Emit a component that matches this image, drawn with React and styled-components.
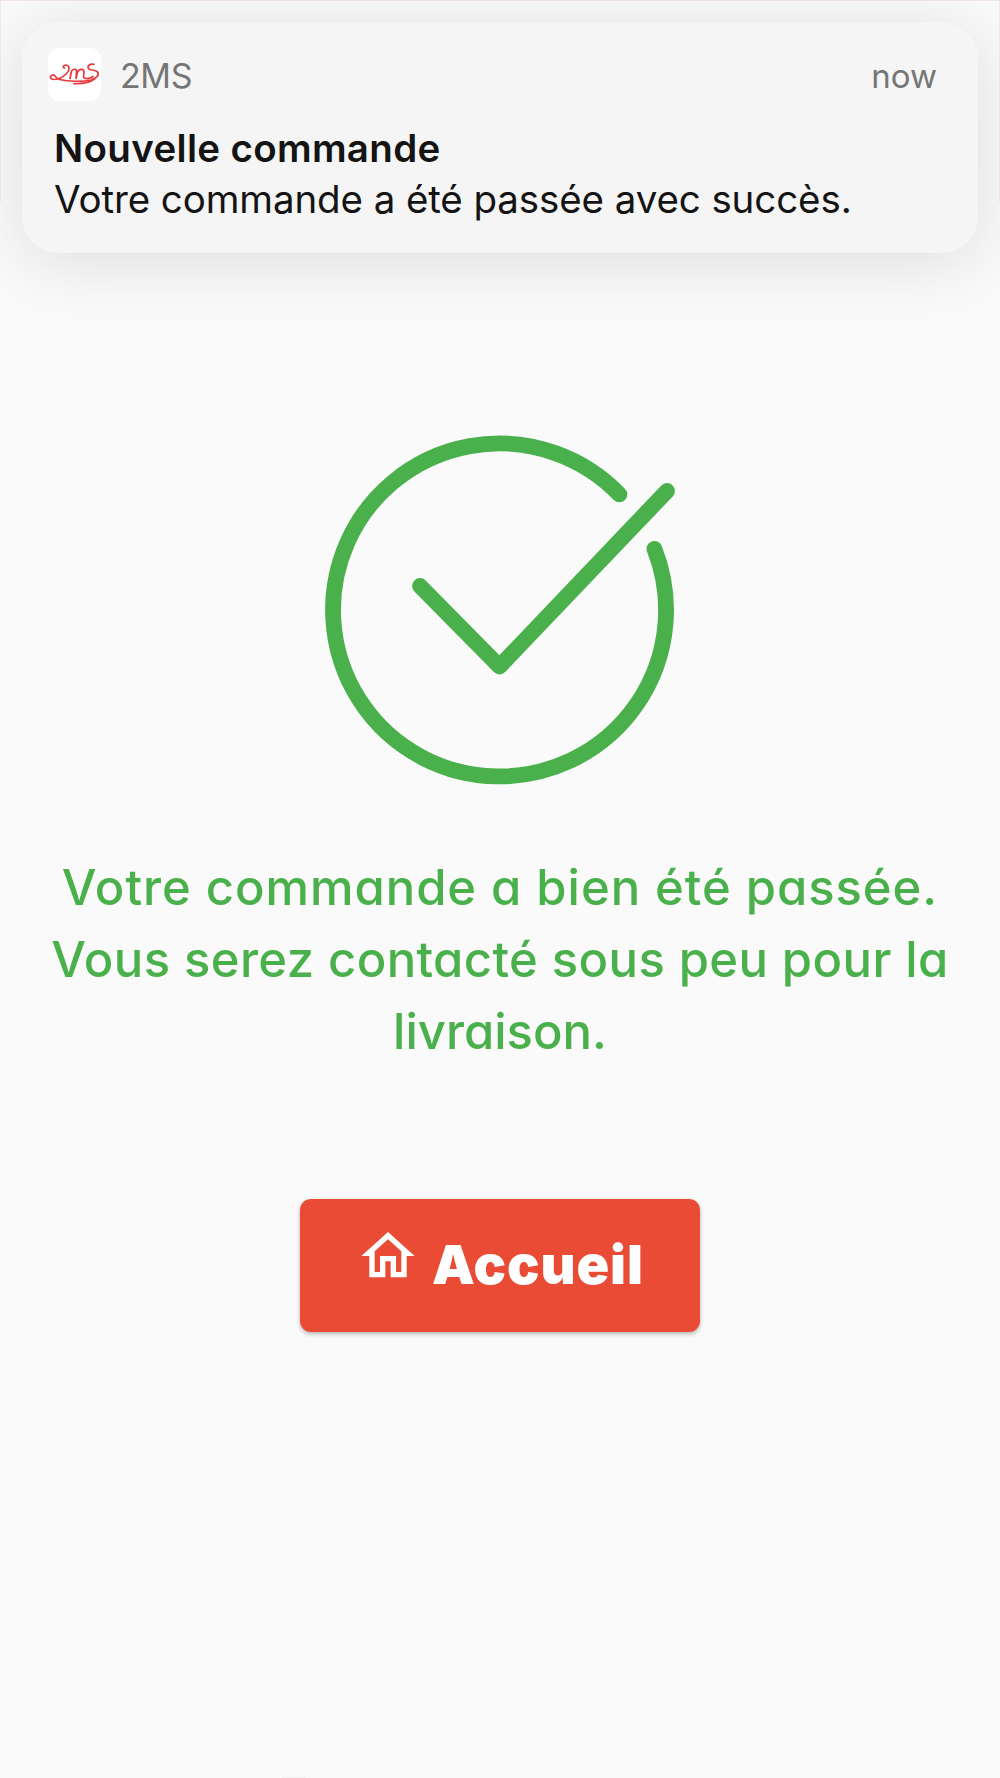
import styled, { createGlobalStyle } from "styled-components";
import { MdOutlineHome } from "react-icons/md";

const GlobalStyle = createGlobalStyle`
  * {
    box-sizing: border-box;
  }
  body {
    margin: 0;
    background-color: #fafafa;
  }
`;

const Container = styled.div`
  width: 1000px;
  height: 1778px;
  padding: 21.5px 22px 0;
  display: flex;
  flex-direction: column;
  align-items: center;
  overflow: hidden;
  font-family: Inter, "Liberation Sans", sans-serif;
  background:
    linear-gradient(#f3e6e7, #f3e6e7) top / 100% 1px no-repeat,
    linear-gradient(#f6eaeb, #f6eaeb) top left / 1px 202px no-repeat,
    linear-gradient(#f6eaeb, #f6eaeb) top right / 1px 202px no-repeat,
    linear-gradient(#f1f1f1, #f1f1f1) 282px 100% / 23px 1px no-repeat,
    #fafafa;
`;

const Notification = styled.div`
  width: 956px;
  height: 231.5px;
  padding: 26.5px 41px 0 26px;
  border-radius: 36px;
  background-color: #f5f5f5;
  box-shadow: 0 8px 68px rgba(0, 0, 0, 0.12);
`;

const Header = styled.div`
  height: 53px;
  display: flex;
  align-items: center;
  color: #757575;
`;

const AppIcon = styled.div`
  width: 53px;
  height: 53px;
  margin-right: 19px;
  border-radius: 11px;
  background-color: white;
`;

const AppName = styled.span`
  flex: 1;
  font-size: 34px;
  line-height: 40px;
  letter-spacing: -0.4px;
  padding-top: 3px;
`;

const Time = styled.span`
  font-size: 33px;
  line-height: 40px;
  padding-top: 3px;
`;

const Title = styled.div`
  margin: 22px 0 0 6px;
  font-size: 38.5px;
  line-height: 51px;
  font-weight: 600;
  letter-spacing: 0.32px;
  color: #141414;
  white-space: nowrap;
`;

const Body = styled.div`
  margin-left: 6px;
  font-size: 38.5px;
  line-height: 51px;
  letter-spacing: -0.1px;
  color: #141414;
  white-space: nowrap;
`;

const CheckIcon = styled.svg`
  width: 350px;
  height: 350px;
  margin-top: 182px;
  fill: none;
  stroke: #49b04b;
  stroke-width: 15.8;
  stroke-linecap: round;
  stroke-linejoin: round;
`;

const Message = styled.div`
  margin-top: 67px;
  display: flex;
  flex-direction: column;
  align-items: center;
  color: #49b04b;
  font-size: 49px;
  font-weight: 500;
  line-height: 72px;
  font-feature-settings: "cv11";
`;

const Line = styled.span`
  white-space: nowrap;
  letter-spacing: ${(props) => props.$spacing};
`;

const Button = styled.button`
  width: 400px;
  height: 133px;
  margin-top: 130.5px;
  padding: 0 0 0 56px;
  display: flex;
  align-items: center;
  border: none;
  border-radius: 11px;
  background-color: #ea4b35;
  color: white;
  box-shadow: 0 2px 4px rgba(0, 0, 0, 0.28);
  font-family: inherit;
  cursor: pointer;
`;

const HomeIcon = styled(MdOutlineHome)`
  width: 64px;
  height: 64px;
  margin-bottom: 19px;
  flex-shrink: 0;
`;

const Label = styled.span`
  margin-left: 12px;
  font-size: 54px;
  font-weight: 900;
  line-height: 64px;
  letter-spacing: 0.9px;
`;

const Logo = () => (
  <svg
    width="53"
    height="53"
    viewBox="0 0 53 53"
    fill="none"
    stroke="#e8383b"
    strokeWidth="1.7"
    strokeLinecap="round"
    strokeLinejoin="round"
  >
    <path d="M16.500 20C14.500 19.500 15 17 18 17C22 17.500 22 22 18.500 25.500C15 29 10 31.500 6 31.500C1.500 31.500 1.500 27.500 4.500 27C8 26.500 7 30.500 11.500 31.500C20 33.500 35 34 43 32C49 30 51 27 50 24.500C48.500 21.500 42 23 40.500 20.500C39 17.500 42 15.500 46 16.300" />
    <path d="M22 30.500L23.500 23C25.500 20.500 29 20.500 28.500 24L28 30.500L29.500 24C31.500 20.500 36.500 20.500 36 24L35.500 29C36.500 31.500 42 31 45 28.500" />
    <path d="M26 35.700C33 36 42 34.500 47 30.500" />
  </svg>
);

const App = () => {
  return (
    <>
      <GlobalStyle />
      <Container>
        <Notification>
          <Header>
            <AppIcon>
              <Logo />
            </AppIcon>
            <AppName>2MS</AppName>
            <Time>now</Time>
          </Header>
          <Title>Nouvelle commande</Title>
          <Body>Votre commande a été passée avec succès.</Body>
        </Notification>
        <CheckIcon viewBox="0 0 350 350">
          <path d="M294.4 59.4A166.5 166.5 0 1 0 329.4 113.8" />
          <path d="M95 151L174.5 231.5L342 56" />
        </CheckIcon>
        <Message>
          <Line $spacing="0.95px">Votre commande a bien été passée.</Line>
          <Line $spacing="0.4px">Vous serez contacté sous peu pour la</Line>
          <Line $spacing="0px">livraison.</Line>
        </Message>
        <Button>
          <HomeIcon />
          <Label>Accueil</Label>
        </Button>
      </Container>
    </>
  );
};

export default App;
